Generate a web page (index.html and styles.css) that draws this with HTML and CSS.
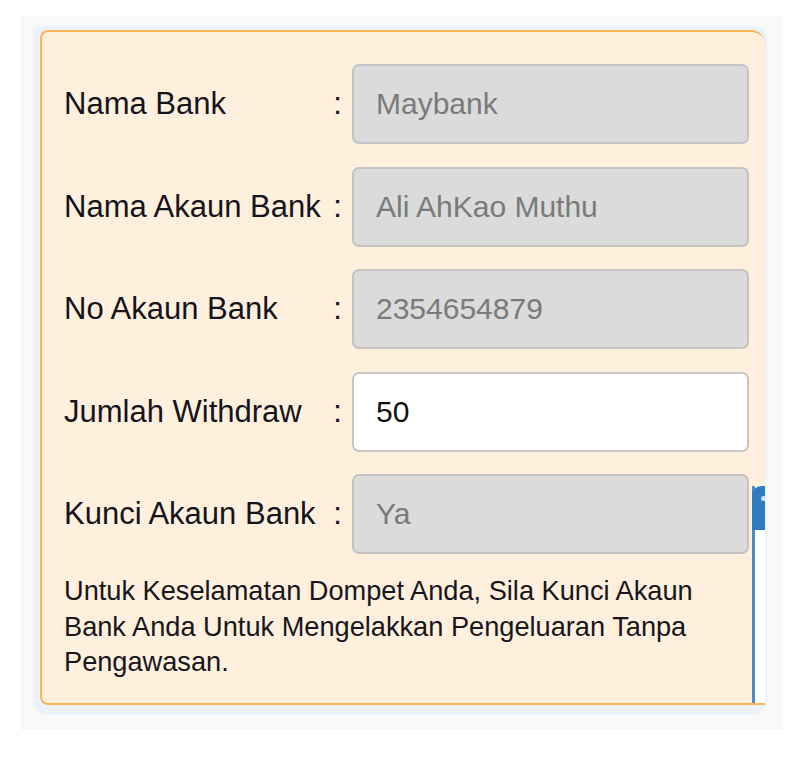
FILE: index.html
```html
<!DOCTYPE html>
<html lang="ms">
<head>
<meta charset="utf-8">
<title>Withdraw</title>
<link rel="stylesheet" href="styles.css">
</head>
<body>
<div class="page">
  <div class="panel">
    <div class="card">
      <form class="form">
        <label class="label" for="bank">Nama Bank</label>
        <span class="colon">:</span>
        <input class="field" id="bank" value="Maybank" disabled>

        <label class="label" for="akaun">Nama Akaun Bank</label>
        <span class="colon">:</span>
        <input class="field" id="akaun" value="Ali AhKao Muthu" disabled>

        <label class="label" for="no">No Akaun Bank</label>
        <span class="colon">:</span>
        <input class="field" id="no" value="2354654879" disabled>

        <label class="label" for="jumlah">Jumlah Withdraw</label>
        <span class="colon">:</span>
        <input class="field" id="jumlah" value="50">

        <label class="label" for="kunci">Kunci Akaun Bank</label>
        <span class="colon">:</span>
        <input class="field" id="kunci" value="Ya" disabled>
      </form>
      <p class="note">Untuk Keselamatan Dompet Anda, Sila Kunci Akaun Bank Anda Untuk Mengelakkan Pengeluaran Tanpa Pengawasan.</p>
      <div class="widget">
        <div class="widget-head"><span class="widget-dot"></span></div>
      </div>
    </div>
  </div>
</div>
</body>
</html>
```
FILE: styles.css
```css
html, body {
  margin: 0;
  padding: 0;
  background: #ffffff;
  font-family: "Liberation Sans", Arial, sans-serif;
}

.page {
  margin: 16px 0 0 21px;
  width: 761px;
  height: 714px;
  box-sizing: border-box;
  padding: 10px 15px 15px 12px;
  background: #f8f8f9;
}

.panel {
  width: 734px;
  height: 689px;
  box-sizing: border-box;
  padding: 4px 2px 10px 7px;
  background: #ebf2fc;
  border-radius: 8px 14px 16px 14px;
}

.card {
  position: relative;
  overflow: hidden;
  height: 675px;
  box-sizing: border-box;
  background: #fef0dc;
  border: 2px solid #f6b655;
  border-right: none;
  border-radius: 8px 14px 0 8px;
  padding: 32px 16px 0 22px;
}

.form {
  display: grid;
  grid-template-columns: 263px 25px 397px;
  column-gap: 0;
  row-gap: 22.5px;
  align-items: center;
  margin: 0;
}

.label {
  font-size: 31px;
  color: #14141c;
  white-space: nowrap;
}

.colon {
  font-size: 31px;
  color: #14141c;
  text-align: center;
  padding-right: 4px;
}

.field {
  height: 80px;
  width: 397px;
  box-sizing: border-box;
  margin: 0;
  padding: 0 0 0 22px;
  border: 2px solid #c6c6c6;
  border-radius: 7px;
  background: #ffffff;
  font-family: "Liberation Sans", Arial, sans-serif;
  font-size: 30px;
  color: #111111;
  outline: none;
}

.field:disabled {
  background: #dbdbdb;
  color: #7a7a7a;
  border-color: #c3c3c3;
  -webkit-text-fill-color: #7a7a7a;
  opacity: 1;
}

.note {
  margin: 19px 0 0 0;
  width: 660px;
  font-size: 27.2px;
  line-height: 35.5px;
  color: #16161c;
}

.widget {
  position: absolute;
  left: 710px;
  top: 454px;
  width: 14px;
  height: 221px;
  box-sizing: border-box;
  background: #ffffff;
  border-left: 3px solid #4d8ccb;
}

.widget-head {
  height: 44px;
  margin-left: -3px;
  background: #2f7bc0;
  border-top-left-radius: 9px;
  position: relative;
}

.widget-dot {
  position: absolute;
  left: 9px;
  top: 10px;
  width: 5px;
  height: 5px;
  border-radius: 50%;
  background: #cfe2f4;
}
```
